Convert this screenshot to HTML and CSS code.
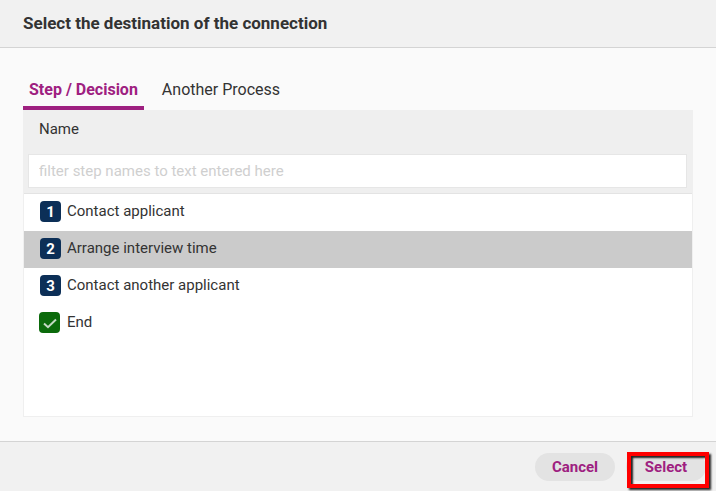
FILE: index.html
```html
<!DOCTYPE html>
<html lang="en">
<head>
  <meta charset="UTF-8">
  <title>Select the destination of the connection</title>
  <link rel="stylesheet" href="styles.css">
</head>
<body>
  <div class="dialog">
    <div class="dialog-head">Select the destination of the connection</div>

    <div class="dialog-body">
      <div class="tabs">
        <a class="tab active">Step / Decision</a>
        <a class="tab">Another Process</a>
      </div>

      <div class="panel">
        <div class="panel-head">
          <div class="col-name">Name</div>
          <input class="filter" type="text" placeholder="filter step names to text entered here">
        </div>
        <div class="step-list">
          <div class="step"><span class="badge">1</span><span class="step-name">Contact applicant</span></div>
          <div class="step selected"><span class="badge">2</span><span class="step-name">Arrange interview time</span></div>
          <div class="step"><span class="badge">3</span><span class="step-name">Contact another applicant</span></div>
          <div class="step">
            <span class="badge end">
              <svg width="16" height="16" viewBox="0 0 16 16"><path d="M2 8.5 L6 12.2 L14 4.5" /></svg>
            </span><span class="step-name">End</span>
          </div>
        </div>
      </div>
    </div>

    <div class="dialog-foot">
      <a class="btn">Cancel</a>
      <a class="btn btn-select">Select</a>
    </div>
  </div>
</body>
</html>
```

FILE: styles.css
```css
html, body {
  margin: 0;
  height: 100%;
}
body {
  font-family: Roboto, "Liberation Sans", sans-serif;
  font-size: 15px;
  color: #333;
  background: #fafafa;
}

.dialog {
  width: 716px;
  height: 491px;
  display: flex;
  flex-direction: column;
  overflow: hidden;
}

.dialog-head {
  height: 47px;
  flex: none;
  padding-left: 23px;
  line-height: 47px;
  font-size: 17px;
  font-weight: 700;
  background: #f1f1f1;
  border-bottom: 1px solid #d4d4d4;
}

.dialog-body {
  flex: 1;
  padding: 29px 23px 24px;
  display: flex;
  flex-direction: column;
  min-height: 0;
}

/* tabs */
.tabs {
  display: flex;
  height: 33px;
  flex: none;
}
.tab {
  padding: 0 6px;
  margin-right: 12px;
  line-height: 26px;
  font-size: 16px;
}
.tab.active {
  font-weight: 700;
  color: #9e2080;
  border-bottom: 4px solid #9e2080;
  height: 29px;
}

/* table */
.panel {
  flex: 1;
  display: flex;
  flex-direction: column;
  background: #fff;
  border: 1px solid #efefef;
  border-top: 0;
}
.panel-head {
  background: #efefef;
  height: 84px;
  flex: none;
  padding: 0 4px;
  border-bottom: 1px solid #e3e3e3;
  box-sizing: border-box;
}
.col-name {
  padding-left: 11px;
  height: 44px;
  line-height: 38px;
}
.filter {
  display: block;
  box-sizing: border-box;
  width: 659px;
  height: 34px;
  padding: 0 10px;
  border: 1px solid #e6e6e6;
  background: #fff;
  font: 15px Roboto, "Liberation Sans", sans-serif;
  outline: none;
}
.filter::placeholder {
  color: #cfcfcf;
}

.step {
  height: 37px;
  display: flex;
  align-items: center;
  gap: 6px;
  padding-left: 16px;
}
.step-name {
  margin-top: -3px;
}
.step.selected {
  background: #cbcbcb;
}
.badge {
  width: 21px;
  height: 21px;
  margin-top: -2px;
  flex: none;
  display: flex;
  align-items: center;
  justify-content: center;
  border-radius: 4px;
  background: #0c2f57;
  color: #fff;
  font-size: 15px;
  font-weight: 700;
}
.badge.end {
  background: #0b6a0b;
  margin-left: -1px;
  margin-right: 1px;
}
.badge svg path {
  fill: none;
  stroke: #c4d9c4;
  stroke-width: 2;
}

/* footer */
.dialog-foot {
  flex: none;
  display: flex;
  justify-content: flex-end;
  align-items: flex-start;
  gap: 11px;
  padding: 11px 10px 0 0;
  box-sizing: border-box;
  height: 50px;
  background: #f1f1f1;
  border-top: 1px solid #d4d4d4;
}
.btn {
  width: 80px;
  height: 28px;
  line-height: 29px;
  text-align: center;
  border-radius: 14px;
  background: #e3e3e3;
  color: #9e2080;
  font-weight: 700;
}
.btn-select {
  position: relative;
}
/* red highlight drawn over the button in the screenshot */
.btn-select::after {
  content: "";
  position: absolute;
  left: 1px;
  right: -3px;
  top: -1px;
  bottom: -7px;
  border: 4px solid #f00;
  box-shadow: 2px 2px 2px #222, inset 2px 2px 2px #222;
}
```
